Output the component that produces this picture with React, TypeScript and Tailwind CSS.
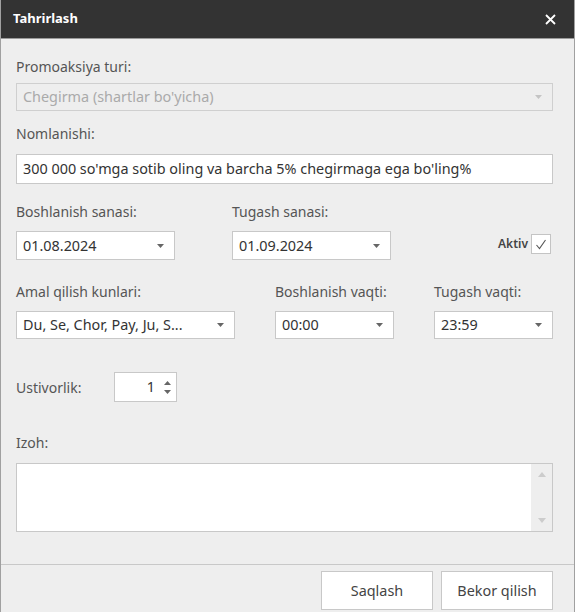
import React from "react";

const font = { fontFamily: '"Noto Sans", "Open Sans", sans-serif' };

function Caret({ muted = false }: { muted?: boolean }) {
  return (
    <svg width="7" height="4" viewBox="0 0 7 4" className="shrink-0">
      <path d="M0 0h7L3.5 4z" fill={muted ? "#c4c4c4" : "#666666"} />
    </svg>
  );
}

function Combo({
  value,
  className,
}: {
  value: string;
  className: string;
}) {
  return (
    <div
      className={`flex items-center justify-between border border-[#c8c8c8] bg-white pl-[6px] pr-[10px] text-[14.4px] text-[#333] ${className}`}
    >
      <span className="truncate">{value}</span>
      <Caret />
    </div>
  );
}

function Label({ children }: { children: React.ReactNode }) {
  return <div className="h-5 text-[14px] leading-5 text-[#555]">{children}</div>;
}

export default function App() {
  return (
    <div
      style={font}
      className="flex h-[612px] w-[575px] flex-col overflow-hidden border-x border-[#a0a0a0] bg-[#eeeeee]"
    >
      <div className="flex h-[39px] shrink-0 items-center justify-between border-b border-[#9a9a9a] bg-[#333333] pl-3 pr-[18px]">
        <span className="text-[13px] font-bold text-white">Tahrirlash</span>
        <svg width="11" height="11" viewBox="0 0 11 11">
          <path d="M1 1l9 9M10 1l-9 9" stroke="#ffffff" strokeWidth="1.8" />
        </svg>
      </div>

      <div className="flex-1 pl-[15px] pr-[21px]">
        <div className="mt-[18px]">
          <Label>Promoaksiya turi:</Label>
          <div className="mt-[6px] flex h-[28px] items-center justify-between border border-[#cfcfcf] bg-[#eeeeee] pl-[6px] pr-[10px] text-[14.4px] text-[#aaaaaa]">
            <span>Chegirma (shartlar bo'yicha)</span>
            <Caret muted />
          </div>
        </div>

        <div className="mt-[13px]">
          <Label>Nomlanishi:</Label>
          <div className="mt-[10px] flex h-[30px] items-center border border-[#c8c8c8] bg-white px-[6px] text-[14.4px] text-[#333]">
            300 000 so'mga sotib oling va barcha 5% chegirmaga ega bo'ling%
          </div>
        </div>

        <div className="mt-[18px] flex items-end">
          <div className="w-[159px]">
            <Label>Boshlanish sanasi:</Label>
            <Combo value="01.08.2024" className="mt-[9px] h-[29px]" />
          </div>
          <div className="ml-[57px] w-[159px]">
            <Label>Tugash sanasi:</Label>
            <Combo value="01.09.2024" className="mt-[9px] h-[29px]" />
          </div>
          <div className="mb-[6px] ml-auto mr-[2px] flex items-center gap-[3px]">
            <span className="text-[12px] font-semibold text-[#444]">Aktiv</span>
            <div className="flex h-[20px] w-[20px] items-center justify-center border border-[#c4c4c4] bg-white">
              <svg width="12" height="11" viewBox="0 0 12 11">
                <path d="M1.5 6l3 3.5L10.5 1" fill="none" stroke="#555" strokeWidth="1.1" />
              </svg>
            </div>
          </div>
        </div>

        <div className="mt-[22px] flex">
          <div className="w-[219px]">
            <Label>Amal qilish kunlari:</Label>
            <Combo value="Du, Se, Chor, Pay, Ju, S..." className="mt-[9px] h-[28px]" />
          </div>
          <div className="ml-[40px] w-[119px]">
            <Label>Boshlanish vaqti:</Label>
            <Combo value="00:00" className="mt-[9px] h-[28px]" />
          </div>
          <div className="ml-[40px] w-[119px]">
            <Label>Tugash vaqti:</Label>
            <Combo value="23:59" className="mt-[9px] h-[28px]" />
          </div>
        </div>

        <div className="mt-[33px] flex items-center">
          <span className="w-[98px] text-[14px] text-[#555]">Ustivorlik:</span>
          <div className="flex h-[30px] w-[63px] items-center justify-end border border-[#c8c8c8] bg-white pr-[5px]">
            <span className="mr-[9px] text-[14.4px] text-[#333]">1</span>
            <div className="flex flex-col gap-[5px]">
              <svg width="7" height="4" viewBox="0 0 7 4">
                <path d="M0 4h7L3.5 0z" fill="#666666" />
              </svg>
              <svg width="7" height="4" viewBox="0 0 7 4">
                <path d="M0 0h7L3.5 4z" fill="#666666" />
              </svg>
            </div>
          </div>
        </div>

        <div className="mt-[31px]">
          <Label>Izoh:</Label>
          <div className="mt-[10px] flex h-[69px] border border-[#c8c8c8] bg-white">
            <div className="flex-1" />
            <div className="flex w-[21px] flex-col items-center justify-between bg-[#eeeeee] py-[8px]">
              <svg width="8" height="5" viewBox="0 0 8 5">
                <path d="M0 5h8L4 0z" fill="#cccccc" />
              </svg>
              <svg width="8" height="5" viewBox="0 0 8 5">
                <path d="M0 0h8L4 5z" fill="#cccccc" />
              </svg>
            </div>
          </div>
        </div>
      </div>

      <div className="flex h-[48px] shrink-0 items-start justify-end gap-[8px] border-t border-[#c8c8c8] pr-[21px] pt-[6px]">
        <button className="h-[39px] w-[112px] border border-[#c8c8c8] bg-white text-[14.4px] text-[#444]">
          Saqlash
        </button>
        <button className="h-[39px] w-[112px] border border-[#c8c8c8] bg-white text-[14.4px] text-[#444]">
          Bekor qilish
        </button>
      </div>
    </div>
  );
}
